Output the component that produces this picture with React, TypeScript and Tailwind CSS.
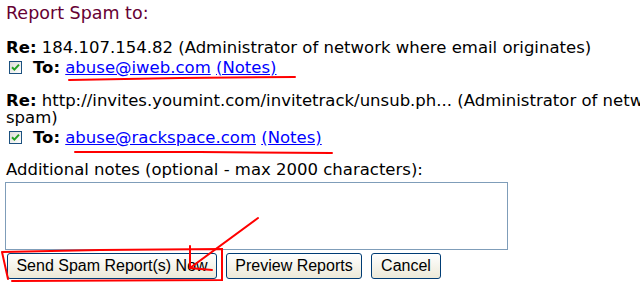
import React from "react";

function XpCheck() {
  return (
    <span className="inline-flex h-[13px] w-[13px] shrink-0 items-center justify-center border border-[#1c5180] bg-gradient-to-br from-[#dcdcd7] to-white">
      <svg width="9" height="9" viewBox="0 0 9 9">
        <path d="M1 4.2 L3.4 6.6 L8 1.6" fill="none" stroke="#21a121" strokeWidth="2" />
      </svg>
    </span>
  );
}

function XpButton({ children, className = "" }: { children: React.ReactNode; className?: string }) {
  return (
    <button
      className={`h-[26px] rounded-[3px] border border-[#003c74] bg-gradient-to-b from-white to-[#ece9d8] px-[8px] text-[16px] leading-none text-black ${className}`}
      style={{ fontFamily: '"Liberation Sans", Arial, sans-serif' }}
    >
      {children}
    </button>
  );
}

function Recipient({ re, email }: { re: React.ReactNode; email: string }) {
  return (
    <div className="mb-[15px]">
      <div className="leading-[17px]">
        <b>Re:</b> {re}
      </div>
      <div className="mt-[1px] flex h-[20px] items-center gap-[11px] pl-[3px] leading-[17px]">
        <XpCheck />
        <span>
          <b>To:</b>{" "}
          <a href="#" className="text-[#0000ff] underline">{email}</a>{" "}
          <a href="#" className="text-[#0000ff] underline">(Notes)</a>
        </span>
      </div>
    </div>
  );
}

export default function App() {
  return (
    <div
      className="relative h-[293px] w-[640px] overflow-hidden bg-white text-[16.5px] text-black"
      style={{ fontFamily: '"DejaVu Sans", Verdana, sans-serif' }}
    >
      <div className="w-[1000px] px-[6px] pt-[3px]">
        <h3 className="mb-[16px] text-[17.5px] leading-[20px] text-[#660033]">Report Spam to:</h3>

        <Recipient re="184.107.154.82 (Administrator of network where email originates)" email="abuse@iweb.com" />

        <Recipient
          re={
            <>
              http://invites.youmint.com/invitetrack/unsub.ph... (Administrator of network hosting website referenced in
              <br />
              spam)
            </>
          }
          email="abuse@rackspace.com"
        />

        <div className="-mt-[1px] leading-[17px]">Additional notes (optional - max 2000 characters):</div>
        <textarea className="mt-[4px] -ml-[1px] block h-[68px] w-[503px] resize-none border border-[#7f9db9] bg-white" />

        <div className="mt-[3px] flex gap-[9px] pl-[1px]">
          <XpButton className="w-[210px]">Send Spam Report(s) Now</XpButton>
          <XpButton className="w-[136px]">Preview Reports</XpButton>
          <XpButton className="w-[70px]">Cancel</XpButton>
        </div>
      </div>

      {/* hand-drawn red marks */}
      <svg className="pointer-events-none absolute left-0 top-0" width="640" height="293" viewBox="0 0 640 293">
        <g fill="none" stroke="#ff0000" strokeWidth="2" strokeLinecap="round">
          <path d="M69 80 L180 78 L295 77" />
          <path d="M75 152 L200 152 L332 153" />
          <path d="M2 252 L100 250 L222 249 L222 280 L12 281 M2 252 L8 279" />
          <path d="M258 218 L190 268 M190 246 L190 268 L212 270" />
        </g>
      </svg>
    </div>
  );
}
